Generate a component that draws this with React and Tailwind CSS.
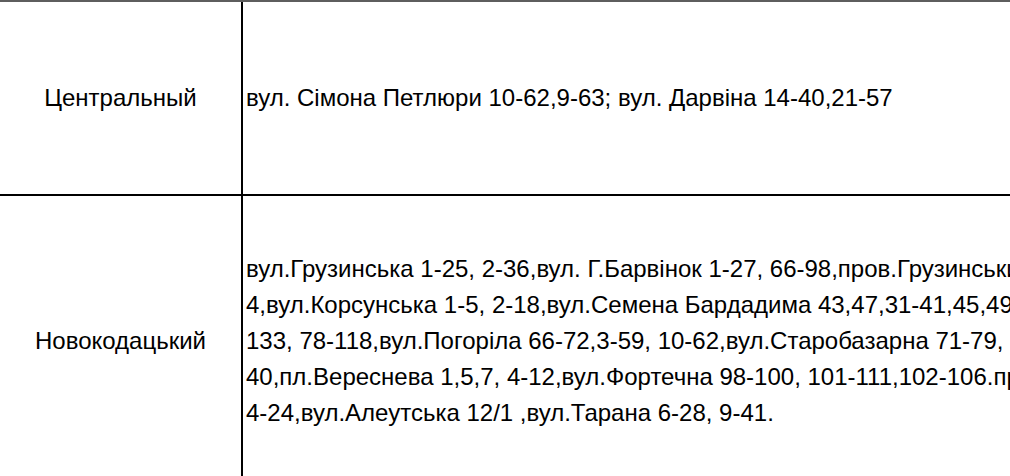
import React from "react";

const rows = [
  {
    district: "Центральный",
    lines: ["вул. Сімона Петлюри 10-62,9-63; вул. Дарвіна 14-40,21-57"],
    height: "h-[194px]",
  },
  {
    district: "Новокодацький",
    lines: [
      "вул.Грузинська 1-25, 2-36,вул. Г.Барвінок 1-27, 66-98,пров.Грузинський 1-9,",
      "4,вул.Корсунська 1-5, 2-18,вул.Семена Бардадима 43,47,31-41,45,49-",
      "133, 78-118,вул.Погоріла 66-72,3-59, 10-62,вул.Старобазарна 71-79, 74-",
      "40,пл.Вереснева 1,5,7, 4-12,вул.Фортечна 98-100, 101-111,102-106.пров.",
      "4-24,вул.Алеутська 12/1 ,вул.Тарана 6-28, 9-41.",
    ],
    height: "h-[290px]",
  },
];

export default function App() {
  return (
    <div
      className="w-[1010px] h-[476px] overflow-hidden bg-white text-black border-t-2 border-[#5e5e5e]"
      style={{ fontFamily: '"Liberation Sans", Arial, sans-serif' }}
    >
      {rows.map((row, i) => (
        <div
          key={i}
          className={`flex ${row.height} ${i === 0 ? "border-b-2 border-black" : ""}`}
        >
          <div className="w-[243px] shrink-0 border-r-2 border-black flex items-center justify-center text-[24px]">
            {row.district}
          </div>
          <div className="flex-1 min-w-0 overflow-hidden flex flex-col justify-center pl-[3px] text-[24px] leading-[36px]">
            {row.lines.map((l, j) => (
              <div key={j} className="whitespace-nowrap">
                {l}
              </div>
            ))}
          </div>
        </div>
      ))}
    </div>
  );
}
